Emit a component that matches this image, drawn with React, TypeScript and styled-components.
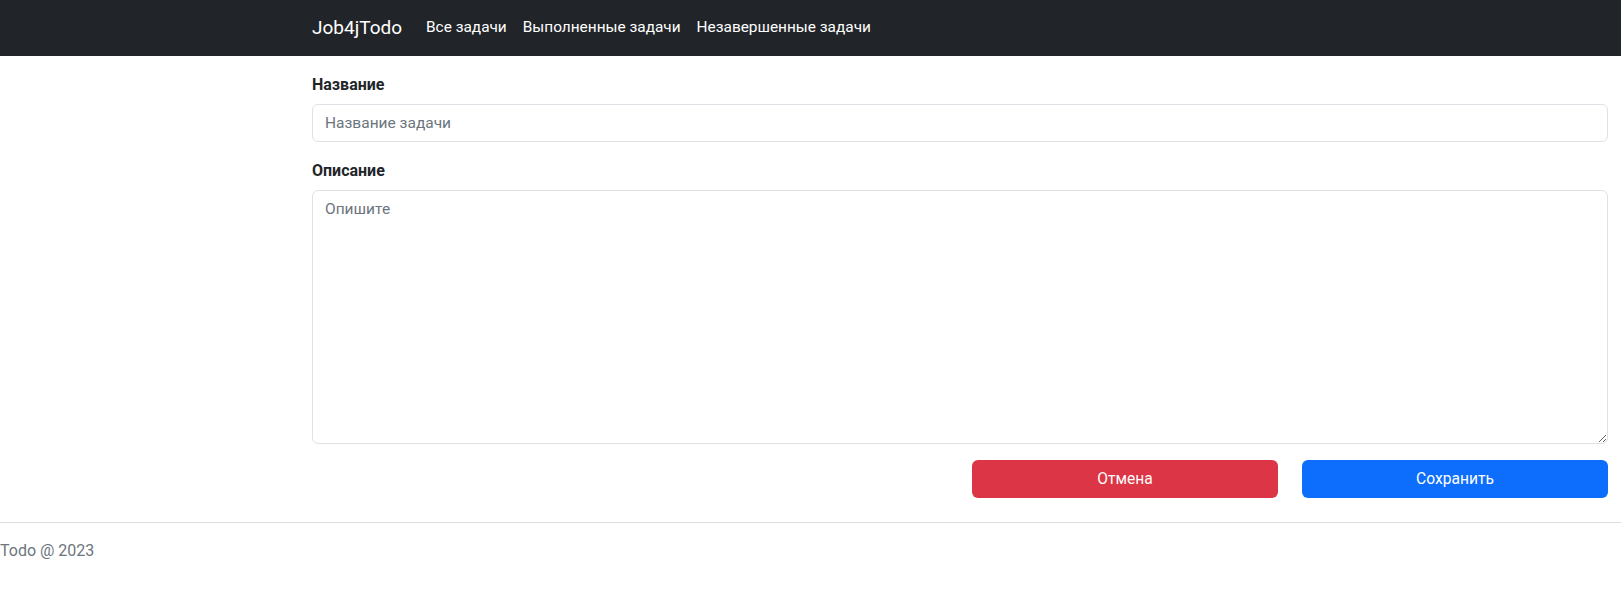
import React from "react";
import styled, { createGlobalStyle } from "styled-components";

const GlobalStyle = createGlobalStyle`
  html, body {
    margin: 0;
    padding: 0;
    background: #ffffff;
    color: #212529;
    font-family: Roboto, "Noto Sans", "Liberation Sans", sans-serif;
    font-size: 16px;
    line-height: 1.5;
  }
  * { box-sizing: border-box; }
`;

const Page = styled.div`
  display: flex;
  flex-direction: column;
`;

const NavBar = styled.nav`
  background: #212529;
  height: 56px;
  display: flex;
  align-items: center;
  padding: 0 13px 0 312px;
`;

const Brand = styled.a`
  font-size: 19px;
  line-height: 30px;
  color: #ffffff;
  text-decoration: none;
  margin-right: 16px;
`;

const NavList = styled.div`
  display: flex;
`;

const NavLink = styled.a`
  color: #ffffff;
  text-decoration: none;
  font-size: 15.4px;
  padding: 8px;
`;

const Main = styled.main`
  padding: 16px 13px 0 312px;
  display: flex;
  flex-direction: column;
`;

const Field = styled.div`
  display: flex;
  flex-direction: column;
  margin-bottom: 16px;
`;

const Label = styled.label`
  font-weight: 700;
  font-size: 16px;
  line-height: 24px;
  margin-bottom: 8px;
  padding-top: 1px;
  height: 24px;
`;

const inputBase = `
  width: 100%;
  font-family: inherit;
  font-size: 15.5px;
  line-height: 24px;
  color: #212529;
  padding: 6px 12px;
  border: 1px solid #dee2e6;
  border-radius: 6px;
  background: #fff;
  outline: none;
  &::placeholder { color: #6c757d; }
`;

const TextInput = styled.input`
  ${inputBase}
  height: 38px;
`;

const TextArea = styled.textarea`
  ${inputBase}
  height: 254px;
  resize: vertical;
  display: block;
`;

const ButtonRow = styled.div`
  display: grid;
  grid-template-columns: repeat(4, 1fr);
  column-gap: 24px;
`;

const Button = styled.button<{ $variant: "danger" | "primary"; $col: number }>`
  grid-column: ${(p) => p.$col};
  height: 38px;
  border: none;
  border-radius: 6px;
  color: #ffffff;
  font-family: inherit;
  font-size: 15.6px;
  background: ${(p) => (p.$variant === "danger" ? "#dc3545" : "#0d6efd")};
  cursor: pointer;
`;

const Footer = styled.footer`
  margin-top: 24px;
  border-top: 1px solid #dcdde0;
  padding-top: 16px;
`;

const FooterText = styled.div`
  color: #6c757d;
  font-size: 16px;
  line-height: 24px;
`;

export default function App() {
  return (
    <Page>
      <GlobalStyle />
      <NavBar>
        <Brand href="#">Job4jTodo</Brand>
        <NavList>
          <NavLink href="#">Все задачи</NavLink>
          <NavLink href="#">Выполненные задачи</NavLink>
          <NavLink href="#">Незавершенные задачи</NavLink>
        </NavList>
      </NavBar>
      <Main>
        <Field>
          <Label htmlFor="title">Название</Label>
          <TextInput id="title" placeholder="Название задачи" />
        </Field>
        <Field>
          <Label htmlFor="description">Описание</Label>
          <TextArea id="description" placeholder="Опишите" rows={10} />
        </Field>
        <ButtonRow>
          <Button $variant="danger" $col={3}>Отмена</Button>
          <Button $variant="primary" $col={4}>Сохранить</Button>
        </ButtonRow>
      </Main>
      <Footer>
        <FooterText>Todo @ 2023</FooterText>
      </Footer>
    </Page>
  );
}
